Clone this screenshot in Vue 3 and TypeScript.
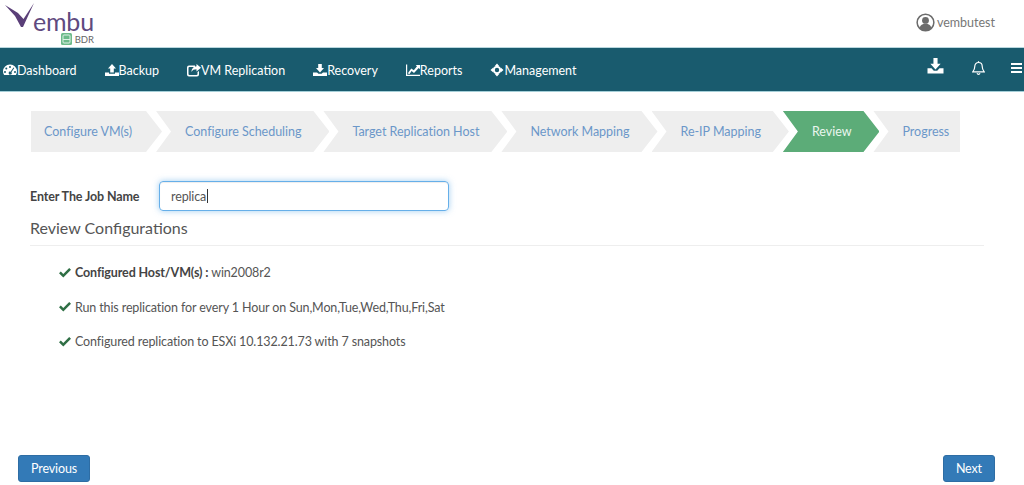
<script setup lang="ts">
interface NavItem { label: string; icon: string }
const nav: NavItem[] = [
  { label: 'Dashboard', icon: 'gauge' },
  { label: 'Backup', icon: 'upload' },
  { label: 'VM Replication', icon: 'share' },
  { label: 'Recovery', icon: 'download' },
  { label: 'Reports', icon: 'chart' },
  { label: 'Management', icon: 'move' },
]
const steps = ['Configure VM(s)', 'Configure Scheduling', 'Target Replication Host', 'Network Mapping', 'Re-IP Mapping', 'Review', 'Progress']
const active = 'Review'
</script>

<template>
  <div class="page">
    <header class="top">
      <div class="logo">
        <div class="logo-main">
          <svg class="logo-v" width="30" height="28" viewBox="0 0 30 28">
            <path d="M0 3 L13 11 L18.500 17 L29 1 L18 25 L16 25 L10 14 Z" fill="#5a3f78" />
          </svg>
          <span class="logo-word">embu</span>
        </div>
        <div class="logo-sub">
          <svg width="11" height="12" viewBox="0 0 11 12">
            <rect x="0" y="0" width="11" height="12" rx="1.500" fill="#6dbb8b" />
            <rect x="2" y="2" width="7" height="8" rx="1" fill="none" stroke="#dff1e6" stroke-width="1" />
            <path d="M2 6.500h7" stroke="#dff1e6" stroke-width="1" />
          </svg>
          <span>BDR</span>
        </div>
      </div>
      <div class="user">
        <svg width="19" height="19" viewBox="0 0 20 20">
          <circle cx="10" cy="10" r="8.800" fill="#fff" stroke="#6b6b6b" stroke-width="1.600" />
          <circle cx="10" cy="7.800" r="3.600" fill="#6b6b6b" />
          <path d="M3.800 16c.6-3.400 3-4.600 6.200-4.600s5.600 1.200 6.200 4.600c-1.600 1.700-3.800 2.800-6.200 2.800s-4.600-1.100-6.200-2.800z" fill="#6b6b6b" />
        </svg>
        <span>vembutest</span>
      </div>
    </header>

    <nav class="nav">
      <ul class="nav-list">
        <li v-for="item in nav" :key="item.label" class="nav-item">
          <svg class="nav-icon" width="14" height="14" viewBox="0 0 14 14" fill="#fff">
            <template v-if="item.icon === 'gauge'">
              <path fill-rule="evenodd" d="M7 1.500a6.800 6.800 0 0 0-7 6.800c0 1.400.4 2.700 1.100 3.700h11.800c.7-1 1.100-2.300 1.100-3.700a6.800 6.800 0 0 0-7-6.800zM7 3a1 1 0 1 1 0 2 1 1 0 0 1 0-2zM3.300 4.400a1 1 0 1 1 0 2 1 1 0 0 1 0-2zM2 8a1 1 0 1 1 0 2 1 1 0 0 1 0-2zM12 8a1 1 0 1 1 0 2 1 1 0 0 1 0-2zM10.500 4.500l.8.5-2.900 4.300a1.500 1.500 0 1 1-.9-.6z" />
            </template>
            <template v-else-if="item.icon === 'upload'">
              <path d="M7 1 L11 5.500 H8.800 V9.500 H5.200 V5.500 H3 Z" />
              <path d="M0 9.500 H4 V10.700 H10 V9.500 H14 V13 H0 Z" />
            </template>
            <template v-else-if="item.icon === 'share'">
              <path fill-rule="evenodd" d="M2 2.500h6v1.500H2.500a1 1 0 0 0-1 1v6a1 1 0 0 0 1 1h7a1 1 0 0 0 1-1V9l1.500-1v3.500a2 2 0 0 1-2 2H2a2 2 0 0 1-2-2V4.500a2 2 0 0 1 2-2z" />
              <path d="M9.500 1 L14 4.800 L9.500 8.500 V6.300 C7 6.300 5.500 7 4.500 9 C4.500 6 6.500 3.500 9.500 3.300 Z" />
            </template>
            <template v-else-if="item.icon === 'download'">
              <path d="M5.200 1 H8.800 V5 H11 L7 9.500 L3 5 H5.200 Z" />
              <path d="M0 9.500 H4 L5.500 10.800 H8.500 L10 9.500 H14 V13 H0 Z" />
            </template>
            <template v-else-if="item.icon === 'chart'">
              <path d="M0 1.500 H1.200 V11.800 H14 V13 H0 Z" />
              <path d="M2.300 9.500 L5.300 5.500 L7.800 7.300 L11 3.300 L9.700 2 H14 V6.300 L12.700 5 L8 10 L5.600 8 L3.500 11 H2.300 Z" />
            </template>
            <template v-else>
              <path fill-rule="evenodd" d="M7 .5 L9.200 3 H8.300 C9.600 3.400 10.600 4.400 11 5.700 V4.800 L13.500 7 L11 9.200 V8.300 C10.600 9.600 9.600 10.600 8.300 11 H9.200 L7 13.500 L4.800 11 H5.700 C4.400 10.600 3.400 9.600 3 8.300 V9.200 L.5 7 L3 4.800 V5.700 C3.400 4.400 4.400 3.400 5.700 3 H4.800 Z M7 4.800 A2.200 2.200 0 1 0 7 9.200 A2.200 2.200 0 1 0 7 4.800 Z" />
            </template>
          </svg>
          <span>{{ item.label }}</span>
        </li>
      </ul>
      <div class="nav-right">
        <svg class="r-download" width="17" height="16" viewBox="0 0 14 14" fill="#fff">
          <path d="M5.200 0 H8.800 V5 H11.500 L7 10 L2.500 5 H5.200 Z" />
          <path d="M0 9 H3.500 L5.500 11.200 H8.500 L10.500 9 H14 V13.500 H0 Z" />
        </svg>
        <svg class="r-bell" width="13" height="14" viewBox="0 0 13 14" fill="none" stroke="#fff" stroke-width="1.200">
          <path d="M6.500 1.500c-2.300 0-3.700 1.700-3.700 3.800 0 3-1 4.400-2 5.500h11.400c-1-1.100-2-2.500-2-5.500 0-2.100-1.400-3.800-3.700-3.800z" />
          <path d="M5 12.300c.3.700.8 1 1.500 1s1.200-.3 1.500-1" />
          <path d="M6.500 .2v1.300" />
        </svg>
        <svg class="r-bars" width="11" height="10" viewBox="0 0 11 10" fill="#fff">
          <rect y="0" width="11" height="2" />
          <rect y="4" width="11" height="2" />
          <rect y="8" width="11" height="2" />
        </svg>
      </div>
    </nav>

    <main class="content">
      <ol class="steps">
        <li v-for="(s, i) in steps" :key="s" class="step" :class="{ first: i === 0, last: i === steps.length - 1, on: s === active }">{{ s }}</li>
      </ol>

      <div class="job">
        <label class="job-label" for="job">Enter The Job Name</label>
        <div class="job-input">replica<span class="caret"></span></div>
      </div>

      <h2 class="title">Review Configurations</h2>

      <ul class="review">
        <li>
          <svg class="check" width="12" height="10" viewBox="0 0 12 10"><path d="M0 5.200 L1.800 3.400 L4.300 5.900 L10.200 0 L12 1.800 L4.300 9.500 Z" /></svg>
          <span><b>Configured Host/VM(s) :</b> win2008r2</span>
        </li>
        <li>
          <svg class="check" width="12" height="10" viewBox="0 0 12 10"><path d="M0 5.200 L1.800 3.400 L4.300 5.900 L10.200 0 L12 1.800 L4.300 9.500 Z" /></svg>
          <span>Run this replication for every 1 Hour on Sun,Mon,Tue,Wed,Thu,Fri,Sat</span>
        </li>
        <li>
          <svg class="check" width="12" height="10" viewBox="0 0 12 10"><path d="M0 5.200 L1.800 3.400 L4.300 5.900 L10.200 0 L12 1.800 L4.300 9.500 Z" /></svg>
          <span>Configured replication to ESXi 10.132.21.73 with 7 snapshots</span>
        </li>
      </ul>

      <div class="actions">
        <button class="btn" type="button">Previous</button>
        <button class="btn" type="button">Next</button>
      </div>
    </main>
  </div>
</template>

<style scoped>
.page {
  width: 1024px;
  height: 485px;
  display: flex;
  flex-direction: column;
  overflow: hidden;
  background: #fff;
  font-family: Lato, "Open Sans", sans-serif;
  font-size: 12.500px;
  letter-spacing: -.12px;
  color: #555;
}
.top {
  height: 47px;
  flex: none;
  display: flex;
  justify-content: space-between;
  padding: 0 29px 0 5px;
  box-sizing: border-box;
}
.logo {
  width: 89px;
  display: flex;
  flex-direction: column;
}
.logo-main {
  display: flex;
  align-items: flex-start;
  height: 31px;
  padding-top: 2px;
}
.logo-v { flex: none; }
.logo-word {
  font-size: 25px;
  font-weight: 400;
  line-height: 24px;
  letter-spacing: -.2px;
  color: #5f4a80;
  margin-left: -2px;
  margin-top: 7px;
}
.logo-sub {
  display: flex;
  justify-content: flex-end;
  align-items: center;
  gap: 3px;
  font-size: 9.500px;
  letter-spacing: 0;
  color: #666;
}
.user {
  display: flex;
  align-items: center;
  gap: 2px;
  height: 44px;
  color: #777;
  letter-spacing: 0;
}
.nav {
  height: 45px;
  flex: none;
  display: flex;
  justify-content: space-between;
  background: #195b6e;
  border-top: 1px solid #b9d7de;
  border-bottom: 1px solid #a5cfd8;
  box-sizing: border-box;
  color: #fff;
}
.nav-list {
  list-style: none;
  margin: 0;
  padding: 1px 0 0 3px;
  display: flex;
  gap: 28px;
  align-items: center;
  letter-spacing: 0;
}
.nav-item {
  display: flex;
  align-items: center;
  gap: 0;
}
.nav-right {
  display: flex;
  align-items: flex-start;
  padding: 10px 2px 0 0;
}
.r-download { margin-right: 28px; }
.r-bell { margin: 3px 26px 0 0; }
.r-bars { margin: 5px 0 0 0; }
.content {
  flex: 1;
  display: flex;
  flex-direction: column;
  padding: 19px 29px 3px 18px;
  min-height: 0;
}
.steps {
  list-style: none;
  margin: 0 0 0 13px;
  padding: 0;
  display: flex;
  height: 41px;
  letter-spacing: -.02px;
}
.step {
  height: 41px;
  line-height: 41px;
  padding: 0 28px 0 29px;
  margin-left: -6px;
  background: #eeeeee;
  color: #6b97c9;
  white-space: nowrap;
  clip-path: polygon(0 0, calc(100% - 16px) 0, 100% 50%, calc(100% - 16px) 100%, 0 100%, 15px 50%);
}
.step.first {
  margin-left: 0;
  padding: 0 30px 0 13px;
  clip-path: polygon(0 0, calc(100% - 16px) 0, 100% 50%, calc(100% - 16px) 100%, 0 100%);
}
.step.last {
  padding-right: 11px;
  clip-path: polygon(0 0, 100% 0, 100% 100%, 0 100%, 15px 50%);
}
.step.on {
  background: #5cac78;
  color: #eaf6ee;
}
.job {
  display: flex;
  align-items: center;
  margin: 29px 0 0 12px;
}
.job-label {
  width: 129px;
  font-weight: 700;
  color: #444;
}
.job-input {
  width: 290px;
  height: 30px;
  box-sizing: border-box;
  padding: 0 11px;
  display: flex;
  align-items: center;
  border: 1px solid #66afe9;
  border-radius: 4px;
  box-shadow: inset 0 1px 1px rgba(0, 0, 0, .075), 0 0 6px rgba(102, 175, 233, .6);
  color: #555;
}
.caret {
  width: 1px;
  height: 14px;
  margin-left: 1px;
  background: #333;
}
.title {
  margin: 6px 0 0 12px;
  padding-bottom: 7px;
  width: 954px;
  border-bottom: 1px solid #eee;
  font-size: 16px;
  font-weight: 400;
  line-height: 21px;
  letter-spacing: 0;
  color: #555;
}
.review {
  list-style: none;
  margin: 18px 0 0 41px;
  padding: 0;
  display: flex;
  flex-direction: column;
  gap: 17px;
}
.review li {
  display: flex;
  align-items: center;
  gap: 4px;
  height: 17.500px;
}
.review b { font-weight: 700; color: #444; }
.check { fill: #2f6f45; flex: none; }
.actions {
  margin-top: auto;
  display: flex;
  justify-content: space-between;
}
.btn {
  height: 27px;
  padding: 0 12px;
  background: #337ab7;
  border: 1px solid #2e6da4;
  border-radius: 3px;
  color: #fff;
  font-family: inherit;
  font-size: 12.500px;
  letter-spacing: -.12px;
}
</style>
